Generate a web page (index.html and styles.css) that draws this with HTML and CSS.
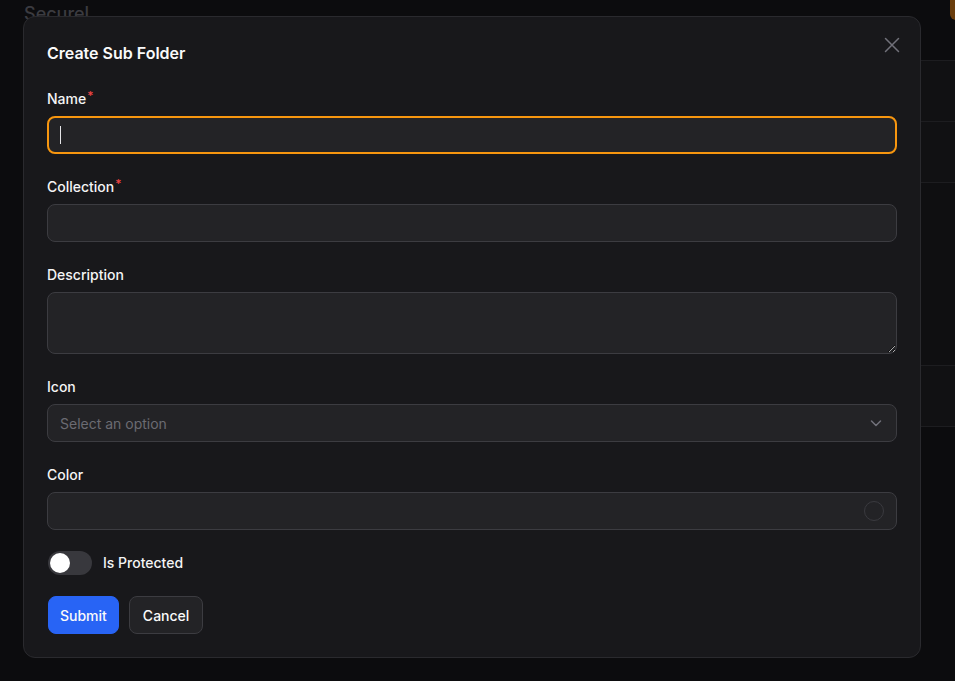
FILE: index.html
```html
<!DOCTYPE html>
<html lang="en">
<head>
<meta charset="utf-8">
<title>Create Sub Folder</title>
<link rel="stylesheet" href="styles.css">
</head>
<body>
<div class="page">
  <header class="page-header">
    <h1 class="page-title">Securel</h1>
    <span class="page-action"></span>
  </header>
  <div class="table">
    <div class="row"></div>
    <div class="row"></div>
    <div class="row row-tall"></div>
    <div class="row"></div>
  </div>
</div>

<div class="overlay">
  <div class="modal">
    <button class="close" type="button" aria-label="Close">
      <svg width="16" height="16" viewBox="0 0 16 16" fill="none" stroke="currentColor" stroke-width="1.5" stroke-linecap="round"><path d="M1.5 1.5 14.5 14.5M14.5 1.5 1.5 14.5"/></svg>
    </button>
    <h2 class="modal-title">Create Sub Folder</h2>
    <form class="form">
      <div class="field">
        <label class="label">Name<span class="req">*</span></label>
        <div class="control-wrap">
          <input class="control focused" type="text">
          <span class="caret"></span>
        </div>
      </div>
      <div class="field">
        <label class="label">Collection<span class="req">*</span></label>
        <input class="control" type="text">
      </div>
      <div class="field">
        <label class="label">Description</label>
        <textarea class="control textarea"></textarea>
      </div>
      <div class="field">
        <label class="label">Icon</label>
        <div class="control select">
          <span class="placeholder">Select an option</span>
          <svg class="chevron" width="16" height="16" viewBox="0 0 16 16" fill="none" stroke="currentColor" stroke-width="1.5" stroke-linecap="round" stroke-linejoin="round"><path d="M3.5 6 8 10.5 12.5 6"/></svg>
        </div>
      </div>
      <div class="field">
        <label class="label">Color</label>
        <div class="control color">
          <span class="swatch"></span>
        </div>
      </div>
      <div class="switch-row">
        <span class="switch"><span class="knob"></span></span>
        <span class="switch-label">Is Protected</span>
      </div>
      <div class="actions">
        <button class="btn btn-primary" type="button">Submit</button>
        <button class="btn btn-secondary" type="button">Cancel</button>
      </div>
    </form>
  </div>
</div>
</body>
</html>
```

FILE: styles.css
```css
html {
  color-scheme: dark;
}
* {
  box-sizing: border-box;
}
body {
  margin: 0;
  background: #0c0c0e;
  font-family: Inter, "Noto Sans", sans-serif;
  color: #f4f4f5;
  overflow: hidden;
  height: 681px;
}

/* underlying page */
.page {
  padding-left: 24px;
}
.page-header {
  display: flex;
  justify-content: space-between;
  align-items: flex-start;
  margin-right: -90px;
  height: 28px;
}
.page-title {
  margin: 0;
  font-size: 18px;
  line-height: 28px;
  font-weight: 500;
  color: #3b3b40;
}
.page-action {
  display: block;
  margin-top: -16px;
  width: 95px;
  height: 36px;
  border-radius: 6px;
  background: #6a3d0c;
}
.table {
  margin-top: 32px;
  border-top: 1px solid #1d1d20;
  background: #111113;
}
.row {
  height: 61px;
  border-bottom: 1px solid #1d1d20;
}
.row-tall {
  height: 183px;
  background: #0f0f11;
}

/* modal */
.overlay {
  position: fixed;
  inset: 0;
  padding: 16px 0 0 23px;
}
.modal {
  position: relative;
  width: 898px;
  background: #18181b;
  border: 1px solid #2a2a2e;
  border-radius: 12px;
  padding: 23px;
}
.close {
  position: absolute;
  top: 20px;
  right: 20px;
  width: 16px;
  height: 16px;
  padding: 0;
  border: 0;
  background: none;
  color: #71717a;
  display: flex;
}
.modal-title {
  margin: 1px 0 24px;
  font-size: 16px;
  line-height: 24px;
  font-weight: 600;
  color: #fafafa;
}
.form {
  display: flex;
  flex-direction: column;
  gap: 23px;
}
.field {
  display: flex;
  flex-direction: column;
  gap: 7px;
}
.label {
  font-size: 14px;
  line-height: 20px;
  font-weight: 500;
  color: #f4f4f5;
}
.req {
  color: #ef4444;
  font-size: 12px;
  line-height: 14px;
  vertical-align: top;
  margin-left: 1px;
}
.control-wrap {
  position: relative;
}
.control {
  display: block;
  width: 100%;
  height: 38px;
  margin: 0;
  padding: 0 12px;
  background: #232326;
  border: 1px solid #3c3c41;
  border-radius: 8px;
  font-family: inherit;
  font-size: 14px;
  color: #f4f4f5;
  outline: none;
}
.control.focused {
  border: 2px solid #f7960f;
  padding: 0 11px;
}
.caret {
  position: absolute;
  left: 13px;
  top: 10px;
  width: 1px;
  height: 18px;
  background: #e4e4e7;
}
.textarea {
  height: 62px;
  padding: 8px 12px;
  resize: vertical;
}
.select {
  display: flex;
  align-items: center;
  justify-content: space-between;
  padding-right: 12px;
}
.placeholder {
  color: #6b6b72;
  font-size: 14px;
}
.chevron {
  color: #71717a;
}
.color {
  display: flex;
  align-items: center;
  justify-content: flex-end;
  padding-right: 12px;
}
.swatch {
  width: 20px;
  height: 20px;
  border-radius: 50%;
  border: 1px solid #3a3a3f;
}
.switch-row {
  display: flex;
  align-items: center;
  gap: 11px;
  height: 20px;
  padding-left: 1px;
}
.switch {
  display: flex;
  align-items: center;
  width: 44px;
  height: 24px;
  margin: -2px 0;
  padding: 2px;
  border-radius: 12px;
  background: #38383d;
}
.knob {
  width: 20px;
  height: 20px;
  border-radius: 50%;
  background: #ffffff;
}
.switch-label {
  font-size: 14px;
  line-height: 20px;
  font-weight: 500;
  color: #f4f4f5;
}
.actions {
  display: flex;
  gap: 10px;
  padding-left: 1px;
}
.btn {
  height: 38px;
  padding: 0 11px;
  border-radius: 8px;
  font-family: inherit;
  font-size: 14px;
  font-weight: 500;
  color: #fafafa;
}
.btn-primary {
  background: #2864f5;
  border: 1px solid #2864f5;
}
.btn-secondary {
  padding: 0 13px;
  background: #232326;
  border: 1px solid #3c3c41;
}
```
